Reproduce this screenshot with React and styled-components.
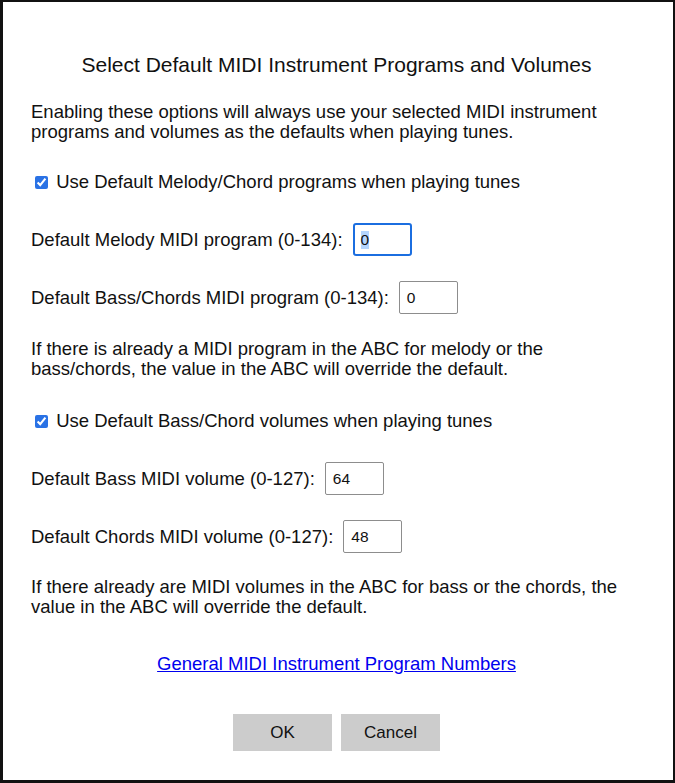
import React from "react";
import styled, { createGlobalStyle } from "styled-components";

const GlobalStyle = createGlobalStyle`
  html, body {
    margin: 0;
    padding: 0;
    background: #fff;
  }
  body {
    font-family: "Liberation Sans", Arial, Helvetica, sans-serif;
    color: #111;
  }
`;

const Dialog = styled.div`
  width: 675px;
  height: 783px;
  box-sizing: border-box;
  border-style: solid;
  border-color: #111;
  border-width: 2px 2px 3px 3px;
  padding: 51px 31px 0 28px;
  display: flex;
  flex-direction: column;
`;

const Title = styled.h1`
  margin: 0;
  font-size: 21px;
  line-height: 24px;
  font-weight: normal;
  text-align: center;
`;

const Para = styled.p`
  margin: ${(p) => p.$top || 25}px 0 0;
  font-size: 18.5px;
  line-height: 20px;
`;

const CheckRow = styled.label`
  display: block;
  margin-top: ${(p) => p.$top}px;
  font-size: 18.5px;
  line-height: 20px;

  input {
    margin: 3px 3px 3px 4px;
    width: 13px;
    height: 13px;
    vertical-align: -1px;
    accent-color: #2a72e5;
  }
`;

const FieldRow = styled.div`
  display: flex;
  align-items: center;
  gap: 10px;
  margin-top: ${(p) => p.$top}px;
  font-size: 18.5px;
  line-height: 20px;
`;

const NumberBox = styled.div`
  box-sizing: border-box;
  width: 59px;
  height: 33px;
  display: flex;
  align-items: center;
  padding-left: ${(p) => (p.$focused ? 6 : 7)}px;
  font-size: 15.5px;
  border: ${(p) => (p.$focused ? "2px solid #1b6ee0" : "1px solid #8d8d8d")};
  border-radius: ${(p) => (p.$focused ? 3 : 2)}px;
  background: #fff;
`;

const Selected = styled.span`
  background: #b4d5fe;
  line-height: 18px;
`;

const LinkLine = styled.div`
  margin-top: 37px;
  text-align: center;
  font-size: 18.5px;
  line-height: 20px;

  a {
    color: #0000ee;
    text-decoration: underline;
  }
`;

const ButtonBar = styled.div`
  display: flex;
  justify-content: center;
  gap: 9px;
  margin-top: 40px;
`;

const Button = styled.button`
  width: 99px;
  height: 37px;
  border: none;
  border-radius: 0;
  background: #cccccc;
  color: #111;
  font-family: "Liberation Sans", Arial, sans-serif;
  font-size: 17px;
  padding: 0;
`;

const Field = ({ label, value, focused, top }) => (
  <FieldRow $top={top}>
    <span>{label}</span>
    <NumberBox $focused={focused}>
      {focused ? <Selected>{value}</Selected> : value}
    </NumberBox>
  </FieldRow>
);

export default function App() {
  return (
    <>
      <GlobalStyle />
      <Dialog>
        <Title>Select Default MIDI Instrument Programs and Volumes</Title>
        <Para $top={25}>
          Enabling these options will always use your selected MIDI instrument
          programs and volumes as the defaults when playing tunes.
        </Para>
        <CheckRow $top={30}>
          <input type="checkbox" defaultChecked /> Use Default Melody/Chord
          programs when playing tunes
        </CheckRow>
        <Field
          top={31}
          label="Default Melody MIDI program (0-134):"
          value="0"
          focused
        />
        <Field top={25} label="Default Bass/Chords MIDI program (0-134):" value="0" />
        <Para $top={25}>
          If there is already a MIDI program in the ABC for melody or the
          bass/chords, the value in the ABC will override the default.
        </Para>
        <CheckRow $top={32}>
          <input type="checkbox" defaultChecked /> Use Default Bass/Chord
          volumes when playing tunes
        </CheckRow>
        <Field top={31} label="Default Bass MIDI volume (0-127):" value="64" />
        <Field top={25} label="Default Chords MIDI volume (0-127):" value="48" />
        <Para $top={24}>
          If there already are MIDI volumes in the ABC for bass or the chords,
          the value in the ABC will override the default.
        </Para>
        <LinkLine>
          <a href="#midi">General MIDI Instrument Program Numbers</a>
        </LinkLine>
        <ButtonBar>
          <Button>OK</Button>
          <Button>Cancel</Button>
        </ButtonBar>
      </Dialog>
    </>
  );
}
